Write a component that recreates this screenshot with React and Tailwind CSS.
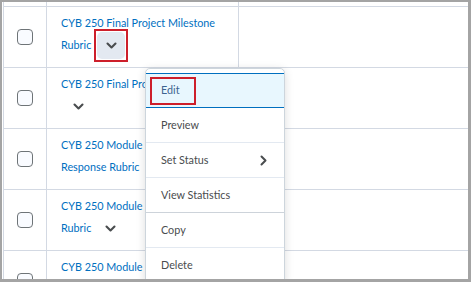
import React from "react";

const rows = [
  { line1: "CYB 250 Final Project Milestone", line2: "Rubric", button: "boxed" },
  { line1: "CYB 250 Final Project Rubric", line2: "", button: "plain" },
  { line1: "CYB 250 Module", line2: "Response Rubric", button: "none" },
  { line1: "CYB 250 Module", line2: "Rubric", button: "plain" },
  { line1: "CYB 250 Module", line2: "Rubric", button: "plain" },
];

const menuItems = ["Edit", "Preview", "Set Status", "View Statistics", "Copy", "Delete"];

function ChevronDown() {
  return (
    <svg width="11" height="7" viewBox="0 0 11 7" fill="none">
      <polyline
        points="1.5,1.5 5.5,5.5 9.5,1.5"
        stroke="#494c4e"
        strokeWidth="2.1"
        strokeLinecap="round"
        strokeLinejoin="round"
      />
    </svg>
  );
}

function ChevronRight() {
  return (
    <svg width="7" height="11" viewBox="0 0 7 11" fill="none">
      <polyline
        points="1.5,1.5 5.5,5.5 1.5,9.5"
        stroke="#494c4e"
        strokeWidth="2"
        strokeLinecap="round"
        strokeLinejoin="round"
      />
    </svg>
  );
}

function Row({ row }) {
  return (
    <div className="flex h-[61px] border-t border-[#d3d9e3]">
      <div className="flex w-[43px] items-center justify-center border-r border-[#d3d9e3]">
        <span className="block h-[16px] w-[16px] rounded-[4px] border-[1.5px] border-[#6e7477] bg-[#f9fbff]" />
      </div>
      <div className="w-[192px] border-r border-[#d3d9e3] pl-[14px] pt-[5px] text-[10.8px] text-[#006fbf]">
        <div className="h-[22px] leading-[22px] whitespace-nowrap">{row.line1}</div>
        <div className="flex h-[22px] items-center leading-[22px] whitespace-nowrap">
          {row.line2 && <span>{row.line2}</span>}
          {row.button === "boxed" && (
            <span className="ml-[3px] border-2 border-[#cd1f2b] p-px">
              <span className="flex h-[27px] w-[28px] items-center justify-center rounded-[5px] bg-[#e3e9f1]">
                <ChevronDown />
              </span>
            </span>
          )}
          {row.button === "plain" && (
            <span className={`${row.line2 ? "ml-[5px]" : "ml-[3px]"} flex h-[28px] w-[28px] items-center justify-center`}>
              <ChevronDown />
            </span>
          )}
        </div>
      </div>
      <div className="flex-1" />
    </div>
  );
}

export default function App() {
  return (
    <div
      className="relative h-[282px] w-[471px] overflow-hidden border-t-2 border-l-2 border-r-[3px] border-b-[3px] border-[#a4a4a4] bg-white"
      style={{ fontFamily: "Lato, 'Open Sans', sans-serif" }}
    >
      <div className="ml-px border-l border-[#d3d9e3]">
        <div className="flex h-[4px]">
          <div className="w-[43px] border-r border-[#d3d9e3]" />
          <div className="w-[192px] border-r border-[#d3d9e3]" />
        </div>
        {rows.map((row, i) => (
          <Row key={i} row={row} />
        ))}
      </div>

      {/* Context menu */}
      <div className="absolute left-[143px] top-[66px] w-[140px] rounded-[5px] border border-[#cdd5dc] bg-white pt-[4px] shadow-[0_2px_10px_rgba(0,0,0,0.14)]">
        {menuItems.map((item, i) => (
          <div
            key={item}
            className={
              i === 0
                ? "relative flex h-[35px] items-center border-y border-[#006fbf] bg-[#e8f7fe] pl-[15px] text-[10.8px] text-[#3d6390]"
                : `flex h-[35px] items-center justify-between pl-[15px] pr-[17px] text-[10.8px] text-[#494c4e] ${
                    i === 3 ? "border-b border-[#cdd3da]" : "border-b border-[#e3e9f1]"
                  }`
            }
          >
            <span>{item}</span>
            {item === "Set Status" && <ChevronRight />}
            {i === 0 && (
              <span className="absolute left-[4px] top-[3px] h-[28px] w-[46px] border-2 border-[#cd1f2b]" />
            )}
          </div>
        ))}
      </div>
    </div>
  );
}
